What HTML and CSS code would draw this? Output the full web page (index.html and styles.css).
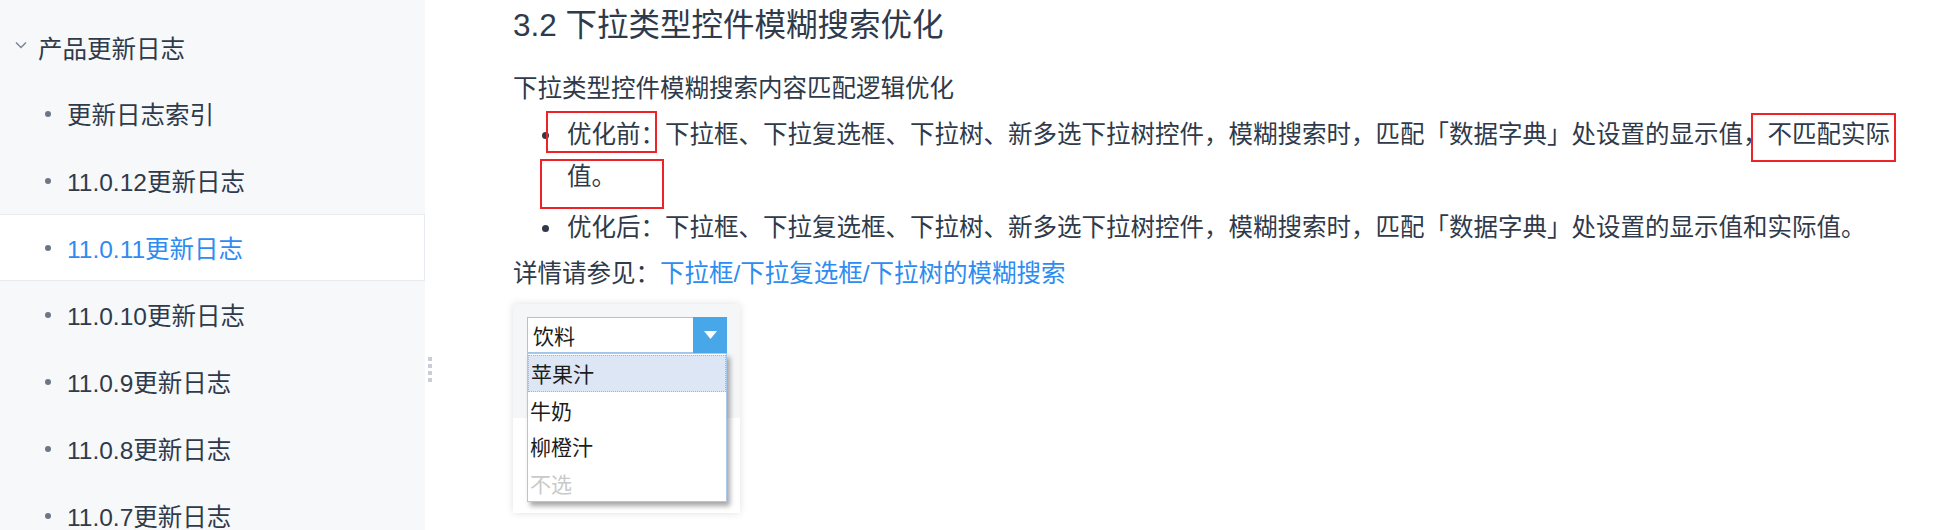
FILE: index.html
```html
<!DOCTYPE html>
<html lang="zh-CN">
<head>
<meta charset="utf-8">
<title>产品更新日志</title>
<link rel="stylesheet" href="styles.css">
</head>
<body>
<div class="layout">
  <aside class="sidebar">
    <div class="group-title">
      <svg class="chevron" width="12" height="8" viewBox="0 0 12 8"><polyline points="1,1.5 6,6.5 11,1.5" fill="none" stroke="#7b8594" stroke-width="1.5"/></svg>
      <span>产品更新日志</span>
    </div>
    <ul class="nav">
      <li class="nav-item"><span class="dot"></span>更新日志索引</li>
      <li class="nav-item"><span class="dot"></span>11.0.12更新日志</li>
      <li class="nav-item active"><span class="dot"></span>11.0.11更新日志</li>
      <li class="nav-item"><span class="dot"></span>11.0.10更新日志</li>
      <li class="nav-item"><span class="dot"></span>11.0.9更新日志</li>
      <li class="nav-item"><span class="dot"></span>11.0.8更新日志</li>
      <li class="nav-item"><span class="dot"></span>11.0.7更新日志</li>
    </ul>
  </aside>
  <div class="resizer">
    <div class="handle"><i></i><i></i><i></i><i></i></div>
  </div>
  <main class="content">
    <h2 class="title">3.2 下拉类型控件模糊搜索优化</h2>
    <p class="para">下拉类型控件模糊搜索内容匹配逻辑优化</p>
    <ul class="bullets">
      <li>优化前：下拉框、下拉复选框、下拉树、新多选下拉树控件，模糊搜索时，匹配「数据字典」处设置的显示值，不匹配实际值。</li>
      <li>优化后：下拉框、下拉复选框、下拉树、新多选下拉树控件，模糊搜索时，匹配「数据字典」处设置的显示值和实际值。</li>
    </ul>
    <p class="para see">详情请参见：<a class="link" href="#">下拉框/下拉复选框/下拉树的模糊搜索</a></p>
    <div class="shot">
      <div class="combo">
        <div class="combo-input">饮料</div>
        <div class="combo-btn">
          <svg width="13" height="8" viewBox="0 0 13 8"><polygon points="0,0 13,0 6.5,8" fill="#fff"/></svg>
        </div>
      </div>
      <ul class="combo-list">
        <li class="opt hover">苹果汁</li>
        <li class="opt">牛奶</li>
        <li class="opt">柳橙汁</li>
        <li class="opt muted">不选</li>
      </ul>
    </div>
    <div class="mark mark-1"></div>
    <div class="mark mark-2"></div>
    <div class="mark mark-3"></div>
  </main>
</div>
</body>
</html>
```

FILE: styles.css
```css
html, body {
  margin: 0;
  padding: 0;
  background: #ffffff;
}

body {
  font-family: "Liberation Sans", "Noto Sans CJK SC", sans-serif;
  color: #2f3a4a;
  overflow: hidden;
}

.layout {
  display: flex;
  height: 530px;
}

/* Sidebar */
.sidebar {
  width: 425px;
  flex: 0 0 425px;
  background: #f7f8fa;
  padding-top: 14px;
  box-sizing: border-box;
  font-size: 24.5px;
}

.group-title {
  height: 66px;
  display: flex;
  align-items: center;
  padding-left: 15px;
  color: #2f3a4a;
}

.chevron {
  margin-right: 11px;
  margin-top: -5px;
}

.nav {
  list-style: none;
  margin: 0;
  padding: 0;
}

.nav-item {
  height: 67px;
  box-sizing: border-box;
  display: flex;
  align-items: center;
  padding-left: 45px;
  color: #2f3a4a;
}

.dot {
  width: 6px;
  height: 6px;
  border-radius: 50%;
  background: #6b7686;
  margin-right: 16px;
  flex: 0 0 6px;
}

.nav-item.active {
  background: #ffffff;
  border-top: 1px solid #e8ebef;
  border-bottom: 1px solid #e8ebef;
  border-right: 1px solid #e8ebef;
  color: #2d8cf0;
}

/* Resizer */
.resizer {
  width: 14px;
  flex: 0 0 14px;
  padding-left: 3px;
  box-sizing: border-box;
}

.handle {
  margin-top: 357px;
  display: flex;
  flex-direction: column;
  gap: 3px;
}

.handle i {
  display: block;
  width: 4px;
  height: 4px;
  background: #c9ced6;
}

/* Content */
.content {
  flex: 1;
  position: relative;
  padding: 4px 35px 0 74px;
  box-sizing: border-box;
}

.title {
  font-size: 31.5px;
  line-height: 42px;
  font-weight: 400;
  margin: 0 0 22px;
  color: #2f3a4a;
}

.para {
  font-size: 24.5px;
  line-height: 42px;
  margin: 0;
}

.bullets {
  list-style: none;
  margin: 4px 0;
  padding: 0 0 0 54px;
  font-size: 24.5px;
  line-height: 42px;
}

.bullets li {
  position: relative;
}

.bullets li + li {
  margin-top: 9px;
}

.bullets li::before {
  content: "";
  position: absolute;
  left: -25.5px;
  top: 18px;
  width: 7px;
  height: 7px;
  border-radius: 50%;
  background: #2f3a4a;
}

.link {
  color: #2d8cf0;
  text-decoration: none;
}

/* Screenshot of combo */
.shot {
  margin-top: 9px;
  width: 227px;
  height: 209px;
  box-sizing: border-box;
  padding: 13px 0 0 14px;
  background: linear-gradient(#f5f6f8 0, #f5f6f8 114px, #ffffff 114px);
  box-shadow: 0 0 8px rgba(0, 0, 0, 0.12);
  font-family: "Noto Sans CJK SC", sans-serif;
  font-size: 21px;
  color: #1c1c1c;
}

.combo {
  display: flex;
  width: 200px;
  height: 36px;
}

.combo-input {
  flex: 1;
  background: #ffffff;
  border: 1px solid #a4c5ea;
  border-right: none;
  box-sizing: border-box;
  padding-left: 5px;
  line-height: 34px;
}

.combo-btn {
  width: 34px;
  flex: 0 0 34px;
  background: #48a7e9;
  display: flex;
  align-items: center;
  justify-content: center;
}

.combo-list {
  list-style: none;
  margin: 0;
  padding: 1px 0 0;
  width: 200px;
  height: 149px;
  box-sizing: border-box;
  border: 1px solid #a9c8ec;
  background: #ffffff;
  box-shadow: 3px 4px 5px rgba(0, 0, 0, 0.35);
}

.opt {
  height: 36.5px;
  line-height: 36.5px;
  padding-left: 2px;
  box-sizing: border-box;
}

.opt.hover {
  background: #dde6f4;
  border: 1px dotted #9db6df;
  line-height: 34.5px;
}

.opt.muted {
  color: #c9c9c9;
}

/* Red annotation boxes drawn over the text */
.mark {
  position: absolute;
  border: 2px solid #ee2328;
  box-sizing: border-box;
  pointer-events: none;
}

.mark-1 {
  left: 107px;
  top: 111px;
  width: 111px;
  height: 42px;
}

.mark-2 {
  left: 101px;
  top: 159px;
  width: 124px;
  height: 50px;
}

.mark-3 {
  left: 1312px;
  top: 113px;
  width: 145px;
  height: 49px;
}
```
